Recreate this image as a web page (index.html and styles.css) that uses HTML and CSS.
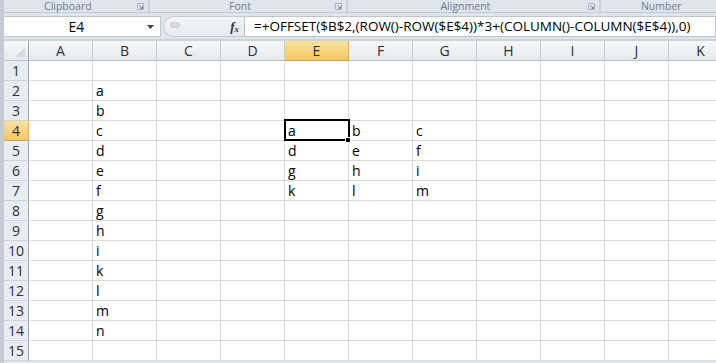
FILE: index.html
```html
<!DOCTYPE html>
<html lang="en">
<head>
    <meta charset="UTF-8">
    <meta name="viewport" content="width=device-width, initial-scale=1.0">
    <title>Book1 - OFFSET</title>
    <link rel="stylesheet" href="styles.css">
</head>
<body>
    <div class="window">
        <!-- ribbon group captions -->
        <div class="ribbon">
            <div class="group g-clip">
                <span class="glabel">Clipboard</span>
                <svg class="launcher" width="7" height="7" viewBox="0 0 7 7"><path d="M0.5 0.5h6v6h-6z" fill="none" stroke="#a8b3c2"/><path d="M2.5 2.5l3 3M3.5 5.5h2v-2" fill="none" stroke="#7d8a9c"/></svg>
            </div>
            <div class="group g-font">
                <span class="glabel">Font</span>
                <svg class="launcher" width="7" height="7" viewBox="0 0 7 7"><path d="M0.5 0.5h6v6h-6z" fill="none" stroke="#a8b3c2"/><path d="M2.5 2.5l3 3M3.5 5.5h2v-2" fill="none" stroke="#7d8a9c"/></svg>
            </div>
            <div class="group g-align">
                <span class="glabel">Alignment</span>
                <svg class="launcher" width="7" height="7" viewBox="0 0 7 7"><path d="M0.5 0.5h6v6h-6z" fill="none" stroke="#a8b3c2"/><path d="M2.5 2.5l3 3M3.5 5.5h2v-2" fill="none" stroke="#7d8a9c"/></svg>
            </div>
            <div class="group g-num">
                <span class="glabel">Number</span>
            </div>
        </div>

        <!-- formula bar -->
        <div class="fbar">
            <div class="namebox">
                <span class="name">E4</span>
                <svg class="drop" width="7" height="4" viewBox="0 0 7 4"><path d="M0 0h7l-3.5 4z" fill="#444"/></svg>
            </div>
            <div class="grip">
                <span class="knob"></span>
                <span class="fx">f<sub>x</sub></span>
            </div>
            <div class="formula">=+OFFSET($B$2,(ROW()-ROW($E$4))*3+(COLUMN()-COLUMN($E$4)),0)</div>
        </div>

        <!-- worksheet -->
        <div class="sheet">
            <div class="corner"></div><div class="h">A</div><div class="h">B</div><div class="h">C</div><div class="h">D</div><div class="h sel">E</div><div class="h">F</div><div class="h">G</div><div class="h">H</div><div class="h">I</div><div class="h">J</div><div class="h">K</div>
            <div class="r">1</div><div class="c"></div><div class="c"></div><div class="c"></div><div class="c"></div><div class="c"></div><div class="c"></div><div class="c"></div><div class="c"></div><div class="c"></div><div class="c"></div><div class="c"></div>
            <div class="r">2</div><div class="c"></div><div class="c">a</div><div class="c"></div><div class="c"></div><div class="c"></div><div class="c"></div><div class="c"></div><div class="c"></div><div class="c"></div><div class="c"></div><div class="c"></div>
            <div class="r">3</div><div class="c"></div><div class="c">b</div><div class="c"></div><div class="c"></div><div class="c"></div><div class="c"></div><div class="c"></div><div class="c"></div><div class="c"></div><div class="c"></div><div class="c"></div>
            <div class="r sel">4</div><div class="c"></div><div class="c">c</div><div class="c"></div><div class="c"></div><div class="c active">a</div><div class="c">b</div><div class="c">c</div><div class="c"></div><div class="c"></div><div class="c"></div><div class="c"></div>
            <div class="r">5</div><div class="c"></div><div class="c">d</div><div class="c"></div><div class="c"></div><div class="c">d</div><div class="c">e</div><div class="c">f</div><div class="c"></div><div class="c"></div><div class="c"></div><div class="c"></div>
            <div class="r">6</div><div class="c"></div><div class="c">e</div><div class="c"></div><div class="c"></div><div class="c">g</div><div class="c">h</div><div class="c">i</div><div class="c"></div><div class="c"></div><div class="c"></div><div class="c"></div>
            <div class="r">7</div><div class="c"></div><div class="c">f</div><div class="c"></div><div class="c"></div><div class="c">k</div><div class="c">l</div><div class="c">m</div><div class="c"></div><div class="c"></div><div class="c"></div><div class="c"></div>
            <div class="r">8</div><div class="c"></div><div class="c">g</div><div class="c"></div><div class="c"></div><div class="c"></div><div class="c"></div><div class="c"></div><div class="c"></div><div class="c"></div><div class="c"></div><div class="c"></div>
            <div class="r">9</div><div class="c"></div><div class="c">h</div><div class="c"></div><div class="c"></div><div class="c"></div><div class="c"></div><div class="c"></div><div class="c"></div><div class="c"></div><div class="c"></div><div class="c"></div>
            <div class="r">10</div><div class="c"></div><div class="c">i</div><div class="c"></div><div class="c"></div><div class="c"></div><div class="c"></div><div class="c"></div><div class="c"></div><div class="c"></div><div class="c"></div><div class="c"></div>
            <div class="r">11</div><div class="c"></div><div class="c">k</div><div class="c"></div><div class="c"></div><div class="c"></div><div class="c"></div><div class="c"></div><div class="c"></div><div class="c"></div><div class="c"></div><div class="c"></div>
            <div class="r">12</div><div class="c"></div><div class="c">l</div><div class="c"></div><div class="c"></div><div class="c"></div><div class="c"></div><div class="c"></div><div class="c"></div><div class="c"></div><div class="c"></div><div class="c"></div>
            <div class="r">13</div><div class="c"></div><div class="c">m</div><div class="c"></div><div class="c"></div><div class="c"></div><div class="c"></div><div class="c"></div><div class="c"></div><div class="c"></div><div class="c"></div><div class="c"></div>
            <div class="r">14</div><div class="c"></div><div class="c">n</div><div class="c"></div><div class="c"></div><div class="c"></div><div class="c"></div><div class="c"></div><div class="c"></div><div class="c"></div><div class="c"></div><div class="c"></div>
            <div class="r">15</div><div class="c"></div><div class="c"></div><div class="c"></div><div class="c"></div><div class="c"></div><div class="c"></div><div class="c"></div><div class="c"></div><div class="c"></div><div class="c"></div><div class="c"></div>
        </div>
    </div>
</body>
</html>
```

FILE: styles.css
```css
body {
    margin: 0;
    background-color: #ffffff;
    font-family: "Open Sans", "Noto Sans", sans-serif;
}
.window {
    width: 716px;
    height: 363px;
    overflow: hidden;
    box-sizing: border-box;
    border-left: 4px solid #c4cbd4;
    background-color: #dfe5ec;
}

/* ribbon captions */
.ribbon {
    display: flex;
    height: 12px;
    border-bottom: 1px solid #c2cad5;
}
.group {
    position: relative;
    display: flex;
    justify-content: center;
    align-items: flex-end;
    box-sizing: border-box;
    padding-right: 16px;
    border-right: 2px solid #c6ced8;
}
.g-clip { width: 151px; }
.g-font { width: 206px; }
.g-align { width: 262px; }
.g-num { width: 120px; border-right: none; padding-right: 0; padding-left: 6px; }
.glabel {
    font-size: 10.5px;
    line-height: 12px;
    color: #6a7a8f;
}
.launcher {
    position: absolute;
    right: 4px;
    top: 3px;
}

/* formula bar */
.fbar {
    display: flex;
    height: 21px;
    margin-top: 3px;
    border-bottom: 2px solid #ccd3dc;
    padding-bottom: 2px;
}
.namebox {
    width: 157px;
    display: flex;
    align-items: center;
    background-color: #ffffff;
    border: 1px solid #bcc5d1;
    border-left: none;
    box-sizing: border-box;
}
.name {
    flex: 1;
    text-align: center;
    font-size: 14px;
    color: #000;
    padding-left: 2px;
}
.drop {
    margin-right: 6px;
}
.grip {
    width: 82px;
    margin-left: 2px;
    display: flex;
    align-items: center;
    justify-content: space-between;
    background: linear-gradient(#f4f6f8, #e6eaef);
    border: 1px solid #c3cad3;
    border-right: 1px solid #b7bfca;
    border-radius: 11px 0 0 11px;
    box-sizing: border-box;
}
.knob {
    width: 8px;
    height: 4px;
    margin-left: 6px;
    margin-top: -3px;
    border-radius: 4px;
    background-color: #d8dde3;
    border: 1px solid #c4cad2;
}
.fx {
    font-family: "Liberation Serif", serif;
    font-style: italic;
    font-weight: bold;
    font-size: 13px;
    color: #333;
    margin-right: 5px;
}
.fx sub {
    font-size: 9px;
    vertical-align: -1px;
}
.formula {
    flex: 1;
    background-color: #ffffff;
    border: 1px solid #bcc5d1;
    border-left: none;
    font-size: 13.5px;
    line-height: 19px;
    padding-left: 9px;
    white-space: nowrap;
    color: #000;
}

/* sheet grid */
.sheet {
    display: grid;
    grid-template-columns: 25px repeat(11, 64px);
    grid-auto-rows: 20px;
    background-color: #ffffff;
}
.corner, .h, .r {
    box-sizing: border-box;
    background: linear-gradient(#f7f8fa, #e6e9ed);
    border-right: 1px solid #c5cbd3;
    border-bottom: 1px solid #b9c1cb;
    color: #27323f;
    font-size: 14px;
    display: flex;
    align-items: center;
    justify-content: center;
}
.corner {
    position: relative;
    border-right-color: #9aa6b4;
}
.corner::after {
    content: "";
    position: absolute;
    right: 3px;
    bottom: 3px;
    border-left: 10px solid transparent;
    border-bottom: 10px solid #d6dbe1;
}
.r {
    background: #e9ecf0;
    border-right: 1px solid #9aa6b4;
    border-bottom: 1px solid #cdd3da;
}
.h.sel, .r.sel {
    background: linear-gradient(#fae2a0, #f4c863);
    border-right-color: #e2b24a;
    border-bottom-color: #d9a53e;
}
.c {
    box-sizing: border-box;
    border-right: 1px solid #dadcdd;
    border-bottom: 1px solid #dadcdd;
    display: flex;
    align-items: flex-end;
    padding: 0 0 1px 3px;
    font-size: 14px;
    line-height: 16px;
    color: #000;
}
.active {
    position: relative;
}
.active::before {
    content: "";
    position: absolute;
    left: -1px;
    top: -2px;
    width: 66px;
    height: 22px;
    box-sizing: border-box;
    border: 2px solid #000;
}
.active::after {
    content: "";
    position: absolute;
    right: -3px;
    bottom: -3px;
    width: 6px;
    height: 6px;
    background-color: #000;
    border: 1px solid #fff;
    box-sizing: border-box;
}
```
